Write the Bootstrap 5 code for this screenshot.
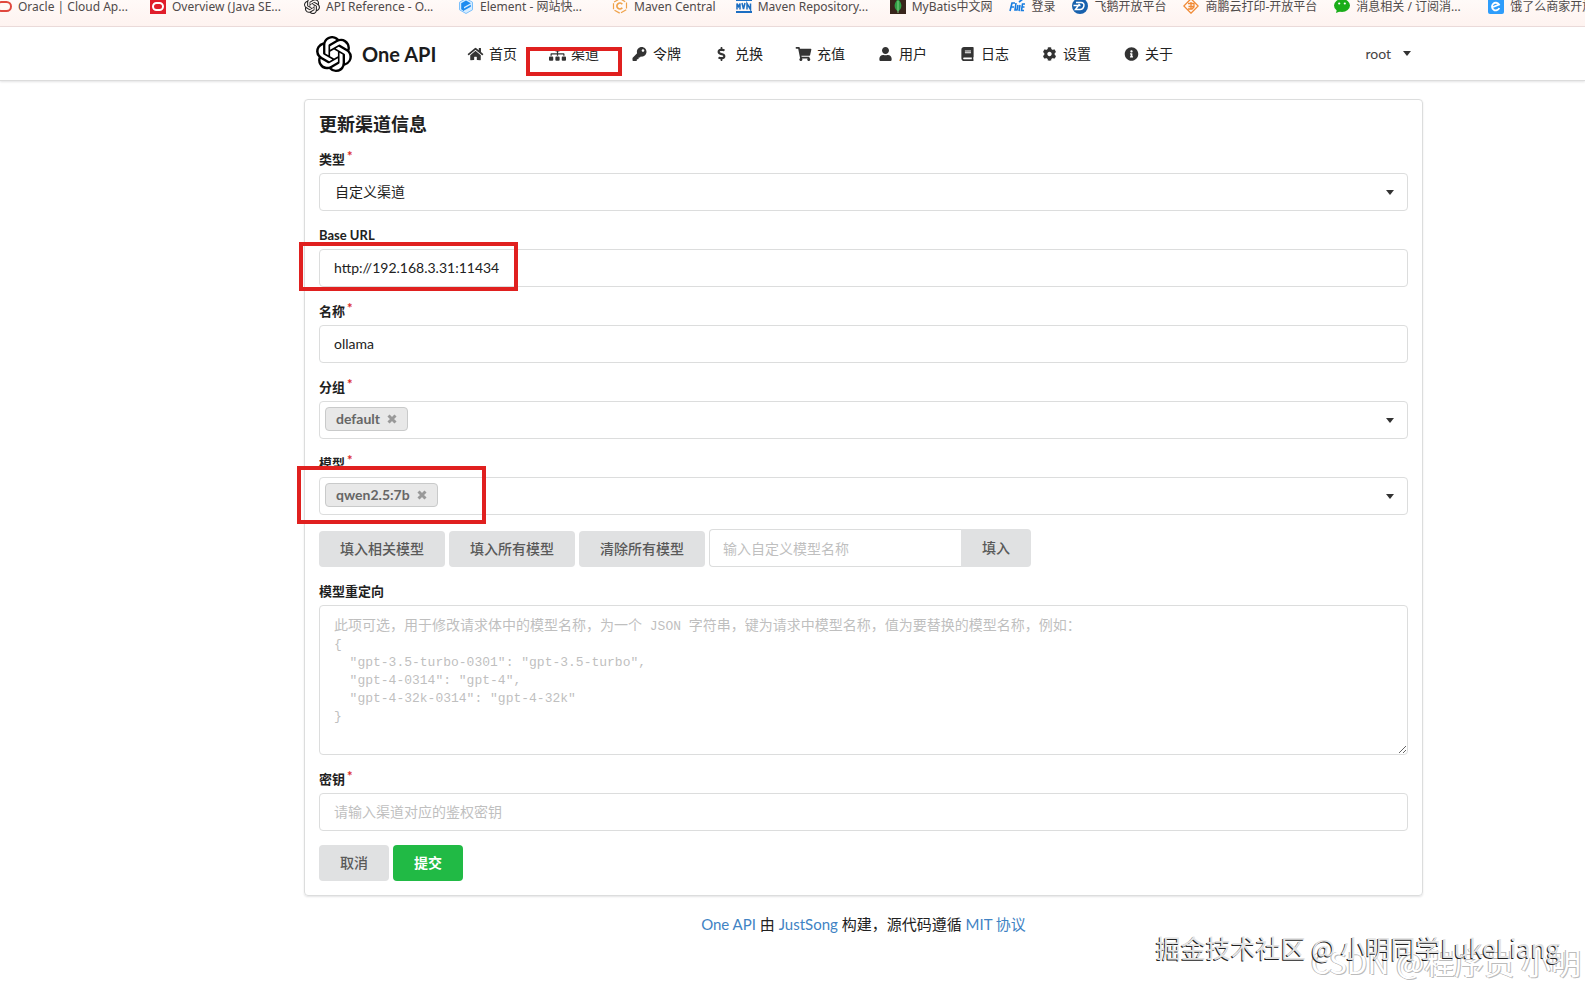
<!DOCTYPE html>
<html lang="zh-CN">
<head>
<meta charset="utf-8">
<meta name="viewport" content="width=device-width, initial-scale=1">
<title>One API</title>
<link href="https://cdn.jsdelivr.net/npm/bootstrap@5.3.0/dist/css/bootstrap.min.css" rel="stylesheet">
<style>
  :root { --line: #dcdddd; --ink: #212121; --grey: #e0e1e2; --mark: #e0201f; }
  body { font-family: Lato, "Noto Sans CJK SC", sans-serif; font-size: 14px; line-height: 20px; color: var(--ink); background: #fff; min-height: 100vh; position: relative; overflow-x: hidden; }
  a { text-decoration: none; }

  /* browser bookmarks strip */
  .bookmarks { height: 27px; gap: 20px; background: linear-gradient(#fffaf8, #fef3f0); border-bottom: 1px solid #ecdcdb; font: 12px/16px "Noto Sans", "Noto Sans CJK SC", sans-serif; }
  .bookmarks a { flex: none; display: flex; gap: 6px; color: #4f4a4a; white-space: nowrap; margin-top: -1px; }
  .bookmarks .full { width: 134px; }
  .bookmarks .first { width: 130px; }
  .bookmarks .near { margin-right: -3px; }
  .bookmarks svg { width: 16px; height: 16px; flex: none; margin-top: -1px; }
  .bookmarks .first svg { width: 12px; }

  .page-col { margin-left: 304px; margin-right: 162px; }

  .topnav { height: 54px; border-bottom: 1px solid #dcdcdc; box-shadow: 0 1px 2px rgba(34,36,38,.12); }
  .brand { color: #1b1c1d; font-size: 20px; font-weight: 700; gap: 10px; padding-left: 12px; width: 147px; }
  .brand svg { width: 36px; height: 36px; }
  .menu-item { display: flex; align-items: center; gap: 5px; padding: 0 16px; color: #222; position: relative; white-space: nowrap; }
  .menu-item .ico { width: 17px; height: 14px; flex: none; fill: #333; }
  .user-menu { background: none; border: 0; color: #444; padding: 0 12px; gap: 12px; }
  .tri { width: 8px; height: 5px; fill: #333; }

  .panel { border: 1px solid var(--line); border-radius: 4px; box-shadow: 0 1px 2px rgba(34,36,38,.12); margin-top: 18px; padding: 14px; }
  .panel h1 { font-size: 18px; line-height: 21px; font-weight: 700; margin: 0 0 14px; }
  .field { margin-bottom: 14px; position: relative; }
  .field > label { display: block; width: max-content; font-size: 13px; font-weight: 700; line-height: 20px; margin-bottom: 4px; }
  .req::after { content: "*"; color: #db2828; margin-left: 2px; font-weight: 700; vertical-align: 3px; line-height: 1; }
  .form-control, .form-select, .multi { height: 38px; border: 1px solid var(--line); border-radius: 4px; font-size: 14px; line-height: 20px; padding: 7px 14px 9px; color: var(--ink); background-color: #fff; }
  .form-select { --bs-form-select-bg-img: url("data:image/svg+xml,%3csvg xmlns='http://www.w3.org/2000/svg' viewBox='0 0 8 5'%3e%3cpath fill='%23333' d='M0 0h8L4 5z'/%3e%3c/svg%3e"); background-size: 8px 5px; background-position: right 13px center; padding: 8px 15px; }
  .form-control::placeholder { color: #bfbfbf; }
  .multi { display: flex; align-items: center; padding: 0 13px 0 5px; }
  .multi input { flex: 1; border: 0; outline: 0; background: none; min-width: 0; }
  .multi button { border: 0; background: none; padding: 0; display: flex; }
  .chip { display: flex; align-items: center; gap: 7px; height: 24px; padding: 0 10px; border: 1px solid #c9caca; border-radius: 4px; background: #e8e8e8; color: #666; font-weight: 700; margin-bottom: 2px; }
  .chip svg { width: 10px; height: 10px; stroke: #999; stroke-width: 3; }

  .act { height: 36px; padding: 0 21px; border: 0; border-radius: 4px; background: var(--grey); color: #595959; font-size: 14px; font-weight: 500; line-height: 20px; }
  .act:hover { background: #cacbcd; color: #444; }
  .act.go { background: #21ba45; color: #fff; font-weight: 700; }
  .custom { width: 322px; }
  .custom .form-control { border-right: 0; padding: 8px 13px; }
  .custom .act { height: 38px; }

  /* the hint shares one grid cell with the textarea and shows while it is empty */
  .hinted { display: grid; }
  .hinted > * { grid-area: 1 / 1; }
  .hinted textarea { height: 150px; padding: 10px 14px; font: 13px/18px "Liberation Mono", "Noto Sans CJK SC", monospace; resize: vertical; }
  .hint { margin: 0; padding: 10px 15px; font: 13px/18px "Liberation Mono", monospace; color: #bfbfbf; pointer-events: none; overflow: hidden; z-index: 1; }
  .hint span { font-family: "Noto Sans CJK SC", sans-serif; font-size: 14px; }
  textarea:not(:placeholder-shown) + .hint { display: none; }

  .outline { position: absolute; border: 4px solid var(--mark); pointer-events: none; z-index: 2; }
  .o-nav { left: -7px; right: -7px; top: 20px; bottom: 4px; }
  .o-url { left: -20px; width: 219px; top: 17px; height: 49px; }
  .o-model { left: -22px; width: 189px; top: 13px; height: 58px; }

  footer { font-size: 15px; margin-top: 18px; }
  footer a { color: #4183c4; }
  .wm { position: absolute; white-space: nowrap; pointer-events: none; font-family: "Noto Sans CJK SC", sans-serif; }
  .wm-a { right: 25px; bottom: 25px; font-size: 25px; line-height: 38px; color: #e4e4e4; text-shadow: -1px 1px 0 #222; z-index: 2; }
  .wm-b { right: 4px; bottom: 9px; font-size: 30px; line-height: 42px; color: #fff; text-shadow: -1px 0 0 #b4b4b4, 1px 1px 0 #bcbcbc; }
</style>
</head>
<body>

<svg class="d-none">
  <symbol id="knot" viewBox="0 0 24 24"><path d="M22.2819 9.8211a5.9847 5.9847 0 0 0-.5157-4.9108 6.0462 6.0462 0 0 0-6.5098-2.9A6.0651 6.0651 0 0 0 4.9807 4.1818a5.9847 5.9847 0 0 0-3.9977 2.9 6.0462 6.0462 0 0 0 .7427 7.0966 5.98 5.98 0 0 0 .511 4.9107 6.051 6.051 0 0 0 6.5146 2.9001A5.9847 5.9847 0 0 0 13.2599 24a6.0557 6.0557 0 0 0 5.7718-4.2058 5.9894 5.9894 0 0 0 3.9977-2.9001 6.0557 6.0557 0 0 0-.7475-7.0729zm-9.022 12.6081a4.4755 4.4755 0 0 1-2.8764-1.0408l.1419-.0804 4.7783-2.7582a.7948.7948 0 0 0 .3927-.6813v-6.7369l2.02 1.1686a.071.071 0 0 1 .038.052v5.5826a4.504 4.504 0 0 1-4.4945 4.4944zm-9.6607-4.1254a4.4708 4.4708 0 0 1-.5346-3.0137l.142.0852 4.783 2.7582a.7712.7712 0 0 0 .7806 0l5.8428-3.3685v2.3324a.0804.0804 0 0 1-.0332.0615L9.74 19.9502a4.4992 4.4992 0 0 1-6.1408-1.6464zM2.3408 7.8956a4.485 4.485 0 0 1 2.3655-1.9728V11.6a.7664.7664 0 0 0 .3879.6765l5.8144 3.3543-2.0201 1.1685a.0757.0757 0 0 1-.071 0l-4.8303-2.7865A4.504 4.504 0 0 1 2.3408 7.872zm16.5963 3.8558L13.1038 8.364 15.1192 7.2a.0757.0757 0 0 1 .071 0l4.8303 2.7913a4.4944 4.4944 0 0 1-.6765 8.1042v-5.6772a.79.79 0 0 0-.407-.667zm2.0107-3.0231l-.142-.0852-4.7735-2.7818a.7759.7759 0 0 0-.7854 0L9.409 9.2297V6.8974a.0662.0662 0 0 1 .0284-.0615l4.8303-2.7866a4.4992 4.4992 0 0 1 6.6802 4.66zM8.3065 12.863l-2.02-1.1638a.0804.0804 0 0 1-.038-.0567V6.0742a4.4992 4.4992 0 0 1 7.3757-3.4537l-.142.0805L8.704 5.459a.7948.7948 0 0 0-.3927.6813zm1.0976-2.3654l2.602-1.4998 2.6069 1.4998v2.9994l-2.5974 1.4997-2.6067-1.4997Z"/></symbol>
  <symbol id="tri" viewBox="0 0 8 5"><path d="M0 0h8L4 5z"/></symbol>
  <symbol id="cross" viewBox="0 0 10 10"><path d="M1.500 1.500l7 7M8.500 1.500l-7 7"/></symbol>
</svg>

<nav class="bookmarks d-flex overflow-hidden" aria-label="书签">
  <a href="#" class="first"><svg viewBox="4 0 12 16"><rect x="1" y="4" width="14" height="9" rx="4.500" fill="none" stroke="#e0483e" stroke-width="2"/></svg>Oracle | Cloud Ap...</a>
  <a href="#" class="full"><svg viewBox="0 0 16 16"><path fill="#e01e2b" d="M0 0h16v16H0z"/><rect x="3" y="5" width="10" height="7" rx="3.500" fill="none" stroke="#fff" stroke-width="2"/></svg>Overview (Java SE...</a>
  <a href="#" class="full"><svg fill="#222"><use href="#knot"/></svg>API Reference - O...</a>
  <a href="#" class="full"><svg viewBox="0 0 16 16"><path d="M8 .500l6.500 3.700v7.600L8 15.500l-6.500-3.700V4.200z" fill="#d6ecff" stroke="#7cc0fb"/><path fill="#1d8cf0" d="M8 2.500l4.800 2.700L6 9v1.500l6.800-3.700v2L6 12.500v.700L3.200 11.200V5.200z"/></svg>Element - 网站快...</a>
  <a href="#"><svg viewBox="0 0 16 16" fill="none" stroke="#efa24a"><path stroke-width="1.200" d="M8 .700l6.500 3.700v7.200L8 15.300l-6.500-3.700V4.400z" stroke-dasharray="6 1.500"/><path stroke-width="1.700" d="M10.300 6.200a3 3 0 1 0 0 3.600"/></svg>Maven Central</a>
  <a href="#" class="full"><svg viewBox="0 0 16 16"><path fill="#1b6ec2" d="M0 1h16v2H0zM0 13h16v2H0z"/><path fill="none" stroke="#1b6ec2" stroke-width="1.500" d="M1 11.500v-6l1.500 3 1.500-3v6M6 5l1.500 6L9 5M11 11.500v-6l3.500 6v-6"/></svg>Maven Repository...</a>
  <a href="#" class="near"><svg viewBox="0 0 16 16"><path fill="#38251c" d="M0 0h16v16H0z"/><path fill="#2f9e44" d="M8 1c5 5 4 10 0 12.500C4 11 3 6 8 1z"/><path stroke="#9be09a" stroke-width=".8" d="M8 3v12"/></svg>MyBatis中文网</a>
  <a href="#" class="near"><svg viewBox="0 0 16 16" fill="none" stroke="#187de0" stroke-width="1.600"><path d="M1 13L3 5h3M2 9h3M7 5l-1 7h2l1-5M11 7l-1 6M16 6h-2.500l-1 6.500H15M13 9h2.500M10 4l4-3"/></svg>登录</a>
  <a href="#" class="near"><svg viewBox="0 0 16 16"><circle cx="8" cy="8" r="8" fill="#1761ad"/><path fill="none" stroke="#fff" stroke-width="1.500" d="M4 4.500h5c5 0 3 7-1 7H3.500l4-5.500M1.500 7.500h7"/></svg>飞鹅开放平台</a>
  <a href="#" class="near"><svg viewBox="0 0 16 16" fill="none" stroke="#f08a35" stroke-width="1.300"><path d="M8 .800L15.200 8 8 15.200.800 8z"/><path d="M5 5.500h6v3H5.500M5 11h4l2-2M8 4v7"/></svg>商鹏云打印-开放平台</a>
  <a href="#" class="full"><svg viewBox="0 0 16 16"><ellipse cx="8" cy="7.500" rx="8" ry="6.500" fill="#1aad19"/><path fill="#1aad19" d="M3 11l-1 4 5-2z"/><circle cx="5.200" cy="5.500" r="1.100" fill="#fff"/><circle cx="10.800" cy="5.500" r="1.100" fill="#fff"/></svg>消息相关 / 订阅消...</a>
  <a href="#"><svg viewBox="0 0 16 16"><rect width="16" height="16" rx="2" fill="#2e9dfb"/><path fill="none" stroke="#fff" stroke-width="1.800" d="M5 9l6-2.500A3.800 3.800 0 1 0 11.300 10"/></svg>饿了么商家开放平台</a>
</nav>

<header class="topnav">
  <div class="page-col d-flex h-100">
    <a href="#" class="brand d-flex align-items-center"><svg><use href="#knot"/></svg>One API</a>
    <nav class="d-flex" aria-label="主导航">
      <a class="menu-item" href="#"><svg class="ico" viewBox="0 0 576 512"><path d="M280.37 148.26L96 300.11V464a16 16 0 0 0 16 16l112.06-.29a16 16 0 0 0 15.92-16V368a16 16 0 0 1 16-16h64a16 16 0 0 1 16 16v95.64a16 16 0 0 0 16 16.05L464 480a16 16 0 0 0 16-16V300L295.67 148.26a12.19 12.19 0 0 0-15.3 0zM571.6 251.47L488 182.56V44.05a12 12 0 0 0-12-12h-56a12 12 0 0 0-12 12v72.61L318.47 43a48 48 0 0 0-61 0L4.34 251.47a12 12 0 0 0-1.6 16.9l25.5 31A12 12 0 0 0 45.15 301l235.22-193.74a12.19 12.19 0 0 1 15.3 0L530.9 301a12 12 0 0 0 16.9-1.6l25.5-31a12 12 0 0 0-1.7-16.93z"/></svg>首页</a>
      <a class="menu-item" href="#"><svg class="ico" viewBox="0 0 640 512"><path d="M128 352H32c-17.67 0-32 14.33-32 32v96c0 17.67 14.33 32 32 32h96c17.67 0 32-14.33 32-32v-96c0-17.67-14.33-32-32-32zm-24-80h192v48h48v-48h192v48h48v-57.59c0-21.17-17.23-38.41-38.41-38.41H344v-64h40c17.67 0 32-14.33 32-32V32c0-17.67-14.33-32-32-32H256c-17.67 0-32 14.33-32 32v96c0 17.67 14.33 32 32 32h40v64H94.41C73.23 224 56 241.23 56 262.41V320h48v-48zm264 80h-96c-17.67 0-32 14.33-32 32v96c0 17.67 14.33 32 32 32h96c17.67 0 32-14.33 32-32v-96c0-17.67-14.33-32-32-32zm240 0h-96c-17.67 0-32 14.33-32 32v96c0 17.67 14.33 32 32 32h96c17.67 0 32-14.33 32-32v-96c0-17.67-14.33-32-32-32z"/></svg>渠道<span class="outline o-nav"></span></a>
      <a class="menu-item" href="#"><svg class="ico" viewBox="0 0 512 512"><path d="M512 176.001C512 273.203 433.202 352 336 352c-11.22 0-22.19-1.062-32.827-3.069l-24.012 27.014A23.999 23.999 0 0 1 261.223 384H224v40c0 13.255-10.745 24-24 24h-40v40c0 13.255-10.745 24-24 24H24c-13.255 0-24-10.745-24-24v-78.059c0-6.365 2.529-12.47 7.029-16.971l161.802-161.802C163.108 213.814 160 195.271 160 176 160 78.798 238.797.001 335.999 0 433.488-.001 512 78.511 512 176.001zM336 128c0 26.510 21.490 48 48 48s48-21.490 48-48-21.490-48-48-48-48 21.490-48 48z"/></svg>令牌</a>
      <a class="menu-item" href="#"><svg class="ico" viewBox="0 0 288 512"><path d="M209.2 233.4l-108-31.6C88.7 198.2 80 186.5 80 173.5c0-16.3 13.2-29.5 29.5-29.5h66.3c12.2 0 24.2 3.7 34.2 10.5 6.1 4.1 14.3 3.1 19.5-2l34.8-34c7.1-6.9 6.1-18.4-1.8-24.5C238 74.8 207.4 64.1 176 64V16c0-8.8-7.2-16-16-16h-32c-8.8 0-16 7.2-16 16v48h-2.5C45.8 64-5.4 118.7.5 183.6c4.2 46.1 39.4 83.6 83.8 96.6l102.5 30c12.5 3.7 21.2 15.3 21.2 28.3 0 16.3-13.2 29.5-29.5 29.5h-66.3C100 368 88 364.3 78 357.5c-6.1-4.1-14.3-3.1-19.5 2l-34.8 34c-7.1 6.9-6.1 18.4 1.8 24.5 24.5 19.2 55.1 29.9 86.5 30v48c0 8.8 7.2 16 16 16h32c8.8 0 16-7.2 16-16v-48.2c46.6-.9 90.3-28.6 105.7-72.7 21.5-61.6-14.6-124.8-72.5-141.7z"/></svg>兑换</a>
      <a class="menu-item" href="#"><svg class="ico" viewBox="0 0 576 512"><path d="M528.12 301.319l47.273-208C578.806 78.301 567.391 64 551.99 64H159.208l-9.166-44.81C147.758 8.021 137.93 0 126.529 0H24C10.745 0 0 10.745 0 24v16c0 13.255 10.745 24 24 24h69.883l70.248 343.435C147.325 417.1 136 435.222 136 456c0 30.928 25.072 56 56 56s56-25.072 56-56c0-15.674-6.447-29.835-16.824-40h209.647C430.447 426.165 424 440.326 424 456c0 30.928 25.072 56 56 56s56-25.072 56-56c0-22.172-12.888-41.332-31.579-50.405l5.517-24.276c3.413-15.018-8.002-29.319-23.403-29.319H218.117l-6.545-32h293.145c11.206 0 20.92-7.754 23.403-18.681z"/></svg>充值</a>
      <a class="menu-item" href="#"><svg class="ico" viewBox="0 0 448 512"><path d="M224 256c70.7 0 128-57.3 128-128S294.7 0 224 0 96 57.3 96 128s57.3 128 128 128zm89.6 32h-16.7c-22.2 10.2-46.9 16-72.9 16s-50.6-5.8-72.9-16h-16.7C60.2 288 0 348.2 0 422.4V464c0 26.5 21.5 48 48 48h352c26.5 0 48-21.5 48-48v-41.6c0-74.2-60.2-134.4-134.4-134.4z"/></svg>用户</a>
      <a class="menu-item" href="#"><svg class="ico" viewBox="0 0 448 512"><path d="M448 360V24c0-13.3-10.7-24-24-24H96C43 0 0 43 0 96v320c0 53 43 96 96 96h328c13.3 0 24-10.7 24-24v-16c0-7.5-3.5-14.3-8.9-18.700-4.2-15.4-4.2-59.3 0-74.700 5.4-4.3 8.9-11.1 8.900-18.600zM128 134c0-3.3 2.7-6 6-6h212c3.3 0 6 2.7 6 6v20c0 3.3-2.7 6-6 6H134c-3.3 0-6-2.7-6-6v-20zm0 64c0-3.3 2.7-6 6-6h212c3.3 0 6 2.7 6 6v20c0 3.3-2.7 6-6 6H134c-3.3 0-6-2.7-6-6v-20zm253.4 250H96c-17.7 0-32-14.3-32-32 0-17.6 14.4-32 32-32h285.4c-1.9 17.1-1.9 46.9 0 64z"/></svg>日志</a>
      <a class="menu-item" href="#"><svg class="ico" viewBox="0 0 512 512"><path d="M487.4 315.7l-42.6-24.6c4.3-23.2 4.3-47 0-70.2l42.6-24.6c4.9-2.8 7.1-8.6 5.5-14-11.1-35.6-30-67.8-54.7-94.6-3.8-4.1-10-5.1-14.8-2.3L380.8 110c-17.9-15.4-38.5-27.3-60.8-35.1V25.8c0-5.6-3.9-10.5-9.4-11.7-36.7-8.2-74.3-7.8-109.2 0-5.5 1.2-9.4 6.1-9.4 11.7V75c-22.2 7.9-42.8 19.8-60.8 35.1L88.7 85.5c-4.9-2.8-11-1.9-14.8 2.3-24.7 26.7-43.6 58.9-54.7 94.6-1.7 5.4.6 11.2 5.5 14L67.3 221c-4.3 23.2-4.3 47 0 70.2l-42.6 24.6c-4.9 2.8-7.1 8.6-5.5 14 11.1 35.6 30 67.8 54.7 94.6 3.8 4.1 10 5.1 14.8 2.3l42.6-24.6c17.9 15.4 38.5 27.3 60.8 35.1v49.2c0 5.6 3.9 10.5 9.4 11.7 36.7 8.2 74.3 7.8 109.2 0 5.5-1.2 9.4-6.1 9.4-11.7v-49.2c22.2-7.9 42.8-19.8 60.8-35.1l42.6 24.6c4.9 2.8 11 1.9 14.8-2.3 24.7-26.7 43.6-58.9 54.7-94.6 1.5-5.5-.7-11.3-5.6-14.1zM256 336c-44.1 0-80-35.9-80-80s35.9-80 80-80 80 35.9 80 80-35.9 80-80 80z"/></svg>设置</a>
      <a class="menu-item" href="#"><svg class="ico" viewBox="0 0 512 512"><path d="M256 8C119.043 8 8 119.083 8 256c0 136.997 111.043 248 248 248s248-111.003 248-248C504 119.083 392.957 8 256 8zm0 110c23.196 0 42 18.804 42 42s-18.804 42-42 42-42-18.804-42-42 18.804-42 42-42zm56 254c0 6.627-5.373 12-12 12h-88c-6.627 0-12-5.373-12-12v-24c0-6.627 5.373-12 12-12h12v-64h-12c-6.627 0-12-5.373-12-12v-24c0-6.627 5.373-12 12-12h64c6.627 0 12 5.373 12 12v100h12c6.627 0 12 5.373 12 12v24z"/></svg>关于</a>
    </nav>
    <button type="button" class="user-menu d-flex align-items-center ms-auto">root<svg class="tri"><use href="#tri"/></svg></button>
  </div>
</header>

<main class="page-col">
  <form class="panel">
    <h1>更新渠道信息</h1>
    <div class="field">
      <label class="req" for="type">类型</label>
      <select id="type" class="form-select"><option>自定义渠道</option></select>
    </div>
    <div class="field">
      <label for="url">Base URL</label>
      <input id="url" class="form-control" type="text" value="http://192.168.3.31:11434">
      <span class="outline o-url"></span>
    </div>
    <div class="field">
      <label class="req" for="name">名称</label>
      <input id="name" class="form-control" type="text" value="ollama">
    </div>
    <div class="field">
      <label class="req" for="group">分组</label>
      <div class="multi">
        <span class="chip">default<button type="button" aria-label="移除"><svg><use href="#cross"/></svg></button></span>
        <input id="group" type="text">
        <button type="button" aria-label="展开"><svg class="tri"><use href="#tri"/></svg></button>
      </div>
    </div>
    <div class="field">
      <label class="req" for="models">模型</label>
      <div class="multi">
        <span class="chip">qwen2.5:7b<button type="button" aria-label="移除"><svg><use href="#cross"/></svg></button></span>
        <input id="models" type="text">
        <button type="button" aria-label="展开"><svg class="tri"><use href="#tri"/></svg></button>
      </div>
      <span class="outline o-model"></span>
    </div>
    <div class="field d-flex gap-1 align-items-end">
      <button type="button" class="btn act">填入相关模型</button>
      <button type="button" class="btn act">填入所有模型</button>
      <button type="button" class="btn act">清除所有模型</button>
      <div class="input-group custom">
        <input class="form-control" type="text" placeholder="输入自定义模型名称" aria-label="自定义模型名称">
        <button type="button" class="btn act">填入</button>
      </div>
    </div>
    <div class="field">
      <label for="mapping">模型重定向</label>
      <div class="hinted">
        <textarea id="mapping" class="form-control" placeholder=" " aria-describedby="mapping-hint"></textarea>
        <pre class="hint" id="mapping-hint"><span>此项可选，用于修改请求体中的模型名称，为一个</span> JSON <span>字符串，键为请求中模型名称，值为要替换的模型名称，例如：</span>
{
  "gpt-3.5-turbo-0301": "gpt-3.5-turbo",
  "gpt-4-0314": "gpt-4",
  "gpt-4-32k-0314": "gpt-4-32k"
}</pre>
      </div>
    </div>
    <div class="field">
      <label class="req" for="key">密钥</label>
      <input id="key" class="form-control" type="text" placeholder="请输入渠道对应的鉴权密钥">
    </div>
    <div class="d-flex gap-1">
      <button type="button" class="btn act">取消</button>
      <button type="submit" class="btn act go">提交</button>
    </div>
  </form>
  <footer class="text-center"><a href="#">One API</a> 由 <a href="#">JustSong</a> 构建，源代码遵循 <a href="#">MIT 协议</a></footer>
</main>

<div class="wm wm-b">CSDN @程序员 小明</div>
<div class="wm wm-a">掘金技术社区 @ 小明同学LukeLiang</div>

<script src="https://cdn.jsdelivr.net/npm/bootstrap@5.3.0/dist/js/bootstrap.bundle.min.js"></script>
</body>
</html>
